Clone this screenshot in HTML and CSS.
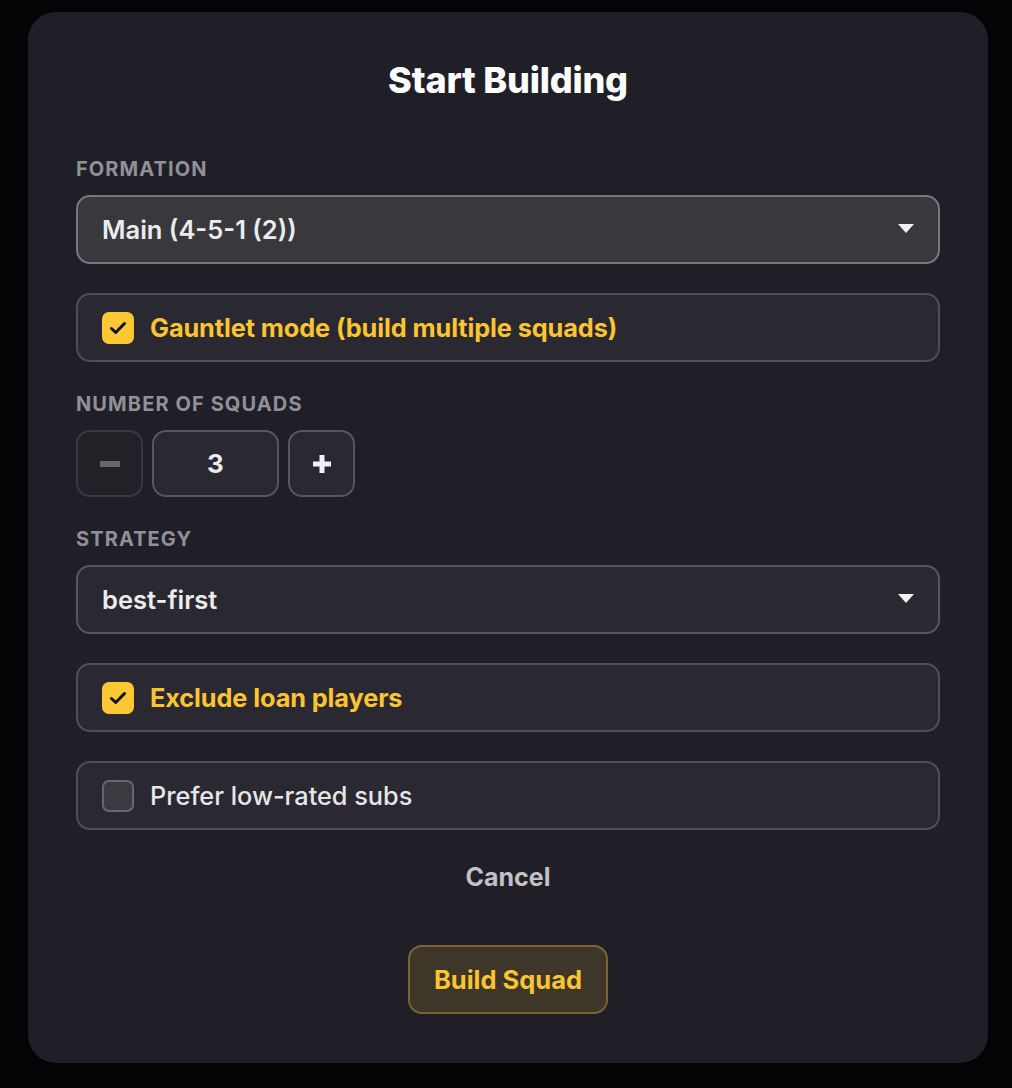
FILE: index.html
```html
<!DOCTYPE html>
<html lang="en">
<head>
    <meta charset="UTF-8">
    <meta name="viewport" content="width=device-width, initial-scale=1.0">
    <title>Start Building</title>
    <link rel="stylesheet" href="styles.css">
</head>
<body>

    <div class="modal">
        <h1>Start Building</h1>

        <div class="field">
            <div class="label">Formation</div>
            <div class="select focused">
                <span>Main (4-5-1 (2))</span>
                <svg class="caret" width="16" height="9" viewBox="0 0 16 9"><path d="M0 0H16L8 9Z" fill="#f2f2f4"/></svg>
            </div>
        </div>

        <label class="check-row checked">
            <span class="box">
                <svg width="20" height="20" viewBox="0 0 20 20"><path d="M3.5 10.5l4.2 4 8.8-9" fill="none" stroke="#111" stroke-width="3" stroke-linecap="round" stroke-linejoin="round"/></svg>
            </span>
            Gauntlet mode (build multiple squads)
        </label>

        <div class="field">
            <div class="label">Number of squads</div>
            <div class="stepper">
                <button type="button" class="step disabled">
                    <svg width="20" height="6" viewBox="0 0 20 6"><rect width="20" height="6" fill="#66666b"/></svg>
                </button>
                <div class="count">3</div>
                <button type="button" class="step">
                    <svg width="20" height="20" viewBox="0 0 20 20"><path d="M10 1V19M1 10H19" stroke="#f2f2f4" stroke-width="5"/></svg>
                </button>
            </div>
        </div>

        <div class="field">
            <div class="label">Strategy</div>
            <div class="select">
                <span>best-first</span>
                <svg class="caret" width="16" height="9" viewBox="0 0 16 9"><path d="M0 0H16L8 9Z" fill="#f2f2f4"/></svg>
            </div>
        </div>

        <label class="check-row checked">
            <span class="box">
                <svg width="20" height="20" viewBox="0 0 20 20"><path d="M3.5 10.5l4.2 4 8.8-9" fill="none" stroke="#111" stroke-width="3" stroke-linecap="round" stroke-linejoin="round"/></svg>
            </span>
            Exclude loan players
        </label>

        <label class="check-row">
            <span class="box"></span>
            Prefer low-rated subs
        </label>

        <div class="actions">
            <button type="button" class="cancel">Cancel</button>
            <button type="button" class="build">Build Squad</button>
        </div>
    </div>

</body>
</html>
```

FILE: styles.css
```css
body {
    font-family: Inter, 'Noto Sans', Arial, sans-serif;
    margin: 0;
    padding: 12px 24px 25px 28px;
    background-color: #040406;
}

.modal {
    width: 960px;
    box-sizing: border-box;
    background-color: #201f27;
    border-radius: 28px;
    padding: 48px 48px 49px;
    display: flex;
    flex-direction: column;
    gap: 29px;
}

h1 {
    margin: 0 0 27px;
    font-size: 36px;
    line-height: 40px;
    font-weight: 800;
    color: #fff;
    text-align: center;
    letter-spacing: -0.2px;
}

.field {
    display: flex;
    flex-direction: column;
    gap: 13px;
}

.label {
    font-size: 20px;
    line-height: 26px;
    font-weight: 700;
    text-transform: uppercase;
    color: #909097;
    letter-spacing: 1.1px;
}

.select {
    height: 69px;
    box-sizing: border-box;
    border: 2px solid #56565d;
    border-radius: 14px;
    background-color: #2a2931;
    padding: 0 24px;
    display: flex;
    align-items: center;
    justify-content: space-between;
    font-size: 25.5px;
    font-weight: 600;
    color: #ececee;
}

.select.focused {
    background-color: #38383d;
    border-color: #77777c;
}

.caret {
    margin-top: -3px;
}

.check-row {
    height: 69px;
    box-sizing: border-box;
    border: 2px solid #4f4f56;
    border-radius: 14px;
    background-color: #2a2931;
    padding: 0 24px;
    display: flex;
    align-items: center;
    gap: 16px;
    font-size: 25.3px;
    font-weight: 500;
    color: #e6e6e8;
}

.check-row.checked {
    color: #fcc430;
    font-weight: 700;
    letter-spacing: -0.1px;
}

.box {
    width: 32px;
    height: 32px;
    box-sizing: border-box;
    border-radius: 7px;
    border: 2px solid #66666c;
    background-color: #3a3a40;
    display: flex;
    align-items: center;
    justify-content: center;
    flex-shrink: 0;
}

.checked .box {
    background-color: #fdc834;
    border-color: #fdc834;
}

.stepper {
    display: flex;
    gap: 9px;
}

.step,
.count {
    height: 67px;
    box-sizing: border-box;
    border: 2px solid #56565d;
    border-radius: 14px;
    background-color: #2a2931;
    display: flex;
    align-items: center;
    justify-content: center;
}

.step {
    width: 67px;
    padding: 0;
    cursor: pointer;
}

.step.disabled {
    background-color: #222127;
    border-color: #3a3940;
    cursor: default;
}

.count {
    width: 127px;
    font-size: 26px;
    font-weight: 700;
    color: #ececee;
}

.actions {
    display: flex;
    flex-direction: column;
    align-items: center;
    gap: 45px;
    margin-top: -5px;
}

.cancel {
    background: none;
    border: none;
    font-family: inherit;
    font-size: 25px;
    line-height: 30px;
    font-weight: 700;
    color: #c2c2c6;
    padding: 8px 16px;
    cursor: pointer;
}

.build {
    height: 69px;
    box-sizing: border-box;
    padding: 0 24px;
    border: 2px solid #7a6431;
    border-radius: 14px;
    background-color: #3d3629;
    font-family: inherit;
    font-size: 25.5px;
    font-weight: 700;
    color: #fcc430;
    cursor: pointer;
}
```
